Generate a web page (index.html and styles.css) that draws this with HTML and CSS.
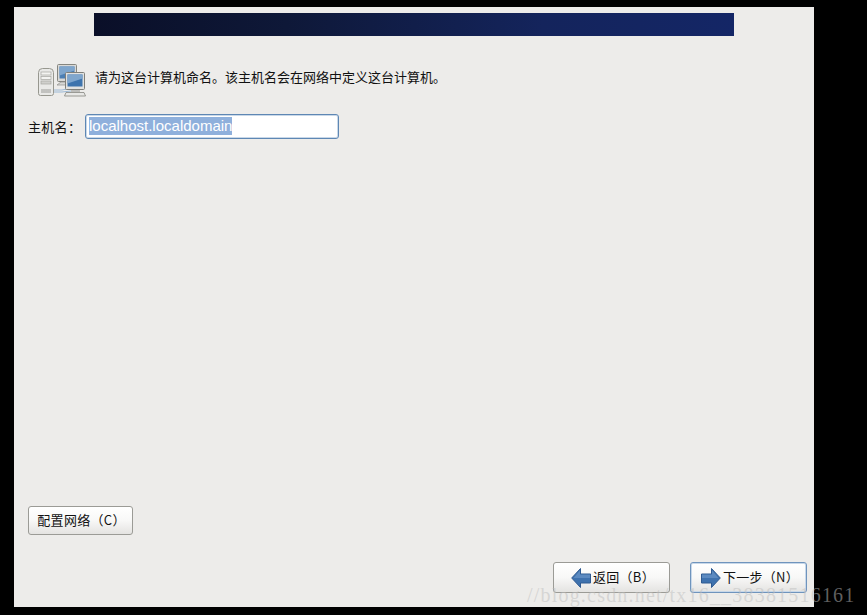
FILE: index.html
```html
<!DOCTYPE html>
<html lang="zh">
<head>
<meta charset="utf-8">
<title>主机名</title>
<link rel="stylesheet" href="styles.css">
</head>
<body>
<main class="panel">
  <div class="banner"></div>
  <div class="intro">
    <svg class="net-icon" width="48" height="34" viewBox="0 0 48 34" aria-hidden="true">
      <path d="M33 24l-9 2-10 0" fill="none" stroke="#9cb9d6" stroke-width="1"/>
      <path d="M33 27l-9 1-10 0" fill="none" stroke="#9cb9d6" stroke-width="1"/>
      <path d="M.5 8.500q0-4 4-4h7q4 0 4 4v21q0 2-2 2h-11q-2 0-2-2z" fill="#e9e9e7" stroke="#97978f"/>
      <rect x="3" y="8" width="10" height="3" fill="#f4f4f2" stroke="#a5a5a2" stroke-width=".7"/>
      <rect x="3" y="12.500" width="10" height="3" fill="#f4f4f2" stroke="#a5a5a2" stroke-width=".7"/>
      <rect x="3" y="17" width="10" height="3" fill="#cfcfcc" stroke="#a5a5a2" stroke-width=".7"/>
      <path d="M4 25v4M6 25v4M8 25v4M10 25v4M12 25v4" stroke="#9a9a97" stroke-width="1"/>
      <rect x="19.500" y="0.500" width="19" height="17" rx="1" fill="#d9d9d7" stroke="#85857f"/>
      <rect x="21.500" y="2.500" width="15" height="12" fill="#4c7fb4"/>
      <path d="M21.500 2.500h15v4l-15 5z" fill="#7fa6cd"/>
      <path d="M23 18h12l1 3H19z" fill="#d8d8d5" stroke="#8f8f8c" stroke-width=".7"/>
      <rect x="27.500" y="8.500" width="19" height="17" rx="1" fill="#e2e2e0" stroke="#7f7f7a"/>
      <rect x="29.500" y="10.500" width="15" height="12" fill="#3e74ad"/>
      <path d="M29.500 10.500h15v4l-15 5z" fill="#7fa6cd"/>
      <rect x="33" y="26" width="9" height="2" fill="#bdbdba"/>
      <path d="M28 28.500h18l1.500 3.500h-21z" fill="#e8e8e6" stroke="#85857f" stroke-width=".8"/>
    </svg>
    <p class="intro-text">请为这台计算机命名。该主机名会在网络中定义这台计算机。</p>
  </div>
  <div class="host-row">
    <span class="host-label">主机名：</span>
    <div class="host-input"><span class="selected">localhost.localdomain</span></div>
  </div>
  <div class="spacer"></div>
  <button class="btn btn-config" type="button"><span class="btn-text">配置网络（C）</span></button>
  <div class="nav">
    <button class="btn btn-nav" type="button">
      <svg width="20" height="20" viewBox="0 0 20 20" aria-hidden="true"><path d="M9.500 .5L.7 10l8.800 9.500V15H19.500V6H9.500z" fill="#3f72ae" stroke="#2f5a91"/><path d="M9 2.500L2.500 10H19V6.500H9z" fill="#6f9bcb" opacity=".6"/></svg>
      <span class="btn-text">返回（B）</span>
    </button>
    <button class="btn btn-nav btn-default" type="button">
      <svg width="20" height="20" viewBox="0 0 20 20" aria-hidden="true"><path d="M10.500 .5L19.300 10l-8.800 9.500V15H.5V6h10z" fill="#3f72ae" stroke="#2f5a91"/><path d="M11 2.500L17.500 10H1V6.500h10z" fill="#6f9bcb" opacity=".6"/></svg>
      <span class="btn-text">下一步（N）</span>
    </button>
  </div>
</main>
<div class="watermark">//blog.csdn.net/tx16__38381516161</div>
</body>
</html>
```
FILE: styles.css
```css
* { box-sizing: border-box; }
html, body { margin: 0; height: 100%; background: #000; overflow: hidden; }
body { padding: 7px 0 0 14px; font-family: "Liberation Sans", "Noto Sans CJK SC", sans-serif; color: #111; }
.panel {
  width: 800px;
  height: 600px;
  background: #edecea;
  padding: 6px 7px 14px 14px;
  display: flex;
  flex-direction: column;
}
.banner {
  width: 640px;
  height: 23px;
  margin-left: 66px;
  flex: none;
  background: linear-gradient(90deg, #0a0f28 0%, #0e1838 30%, #14245c 70%, #142666 100%);
}
.intro { display: flex; align-items: center; gap: 9px; margin: 28px 0 0 10px; height: 34px; }
.net-icon { flex: none; }
.intro-text { margin: 0 0 8px; font-size: 13px; line-height: 16px; font-family: "Noto Sans CJK SC", sans-serif; }
.host-row { display: flex; align-items: center; margin-top: 16px; height: 25px; }
.host-label { width: 57px; font-size: 13px; letter-spacing: .3px; font-family: "Noto Sans CJK TC", sans-serif; white-space: nowrap; margin-top: -1px; }
.host-input {
  width: 254px;
  height: 25px;
  background: #fff;
  border: 1px solid #5e87b4;
  border-radius: 3px;
  box-shadow: 0 0 0 1px #c9d8e8 inset;
  padding: 2px 3px;
  font-size: 15px;
  line-height: 17px;
}
.selected { background: #8fb0dc; color: #fff; display: inline-block; height: 18px; }
.spacer { flex: 1; }
.btn {
  font-family: "Noto Sans CJK SC", "Liberation Sans", sans-serif;
  font-size: 13px;
  color: #111;
  height: 29px;
  padding: 0;
  border: 1px solid #9b9b96;
  border-radius: 3px;
  background: linear-gradient(180deg, #fff 0%, #f8f8f7 50%, #e4e3e1 100%);
  display: flex;
  align-items: center;
  justify-content: center;
}
.btn-text { letter-spacing: .3px; margin-top: -2px; }
.btn-config { width: 105px; align-self: flex-start; margin-bottom: 27px; padding-left: 2px; }
.nav { display: flex; justify-content: flex-end; gap: 20px; }
.btn-nav { width: 117px; height: 31px; gap: 2px; padding-left: 3px; }
.btn-default { border-color: #6f94bd; box-shadow: 0 0 0 1px #c8d8e9 inset; }
.watermark {
  position: absolute;
  left: 527px;
  top: 584px;
  font-family: "Liberation Serif", serif;
  font-size: 20px;
  line-height: 22px;
  letter-spacing: 1.2px;
  color: rgba(190, 190, 190, .5);
  white-space: nowrap;
}
```
